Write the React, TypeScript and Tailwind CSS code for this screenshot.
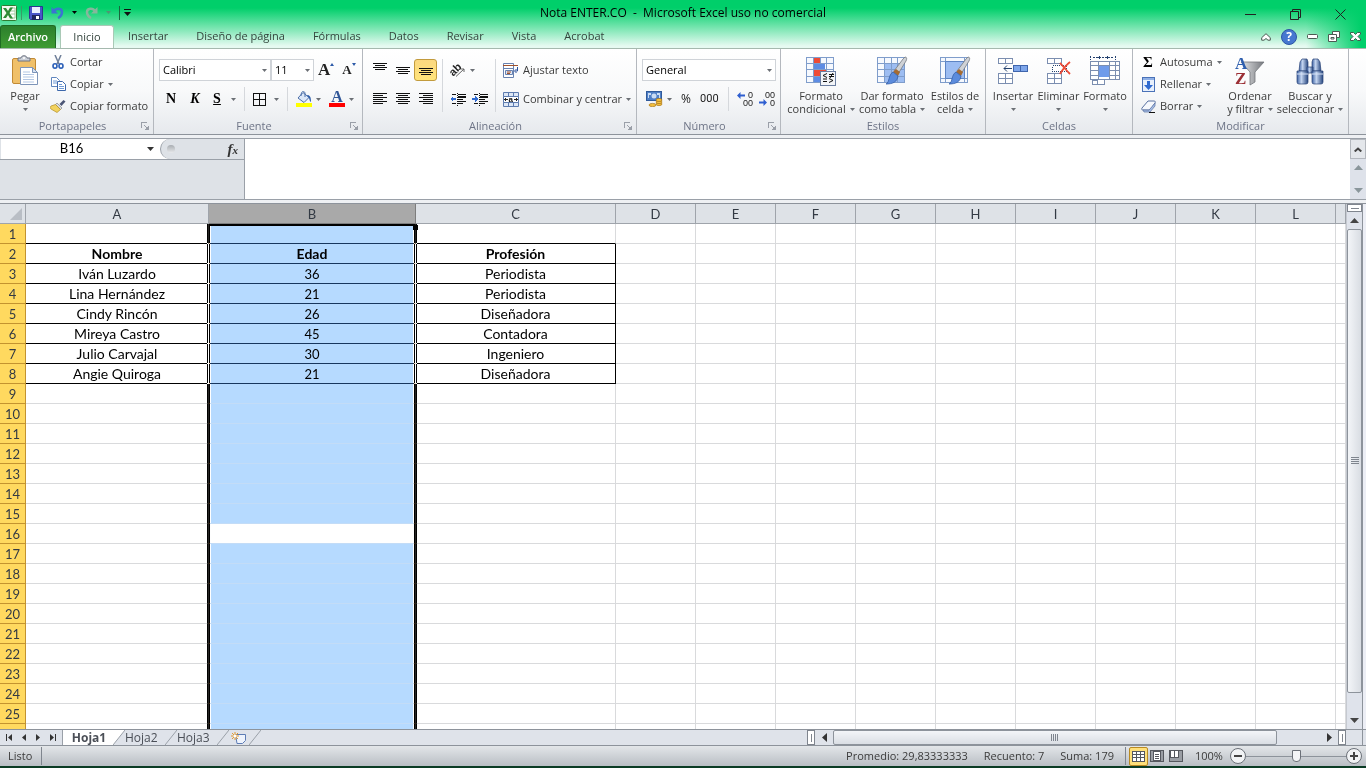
import type { ReactNode } from "react";

const menuTabs = ["Insertar", "Diseño de página", "Fórmulas", "Datos", "Revisar", "Vista", "Acrobat"];

const columns = ["A", "B", "C", "D", "E", "F", "G", "H", "I", "J", "K", "L", ""];

const people = [
    ["Nombre", "Edad", "Profesión"],
    ["Iván Luzardo", "36", "Periodista"],
    ["Lina Hernández", "21", "Periodista"],
    ["Cindy Rincón", "26", "Diseñadora"],
    ["Mireya Castro", "45", "Contadora"],
    ["Julio Carvajal", "30", "Ingeniero"],
    ["Angie Quiroga", "21", "Diseñadora"],
];

const ROWS = 30;
const ACTIVE_ROW = 16;

/* ---------- small shared pieces ---------- */

function Caret({ className = "text-[#6b6f75]" }: { className?: string }) {
    return (
        <svg width="5" height="3" viewBox="0 0 5 3" className={`shrink-0 ${className}`} aria-hidden="true">
            <path d="M0 0h5L2.500 3z" fill="currentColor" />
        </svg>
    );
}

function Divider() {
    return <span className="h-6 w-px shrink-0 bg-[#d5d8dc]" />;
}

function Group({ label, launcher, className, children }: { label: string; launcher?: boolean; className: string; children: ReactNode }) {
    return (
        <section className={`flex shrink-0 flex-col border-r border-[#b4b8be] ${className}`}>
            <div className="h-[69px]">{children}</div>
            <div className="flex h-4 items-center px-1 text-[#6d7486]">
                <span className="flex-1 text-center">{label}</span>
                {launcher && (
                    <button aria-label={`Opciones de ${label}`}>
                        <svg width="8" height="8" viewBox="0 0 8 8" fill="none" stroke="#9a9fa8" shapeRendering="crispEdges">
                            <path d="M.5 6V.5H6" />
                            <path d="M3 3l3 3" shapeRendering="auto" />
                            <path d="M7.500 4v3.500H4" />
                            <path d="M5 5h2v2H5z" fill="#9a9fa8" stroke="none" />
                        </svg>
                    </button>
                )}
            </div>
        </section>
    );
}

function SmallButton({ icon, label, caret }: { icon: ReactNode; label: string; caret?: boolean }) {
    return (
        <button className="flex h-[22px] items-center gap-1 whitespace-nowrap">
            <span className="flex w-4 justify-center">{icon}</span>
            {label}
            {caret && <Caret />}
        </button>
    );
}

function BigButton({ icon, lines, className }: { icon: ReactNode; lines: string[]; className: string }) {
    return (
        <button className={`flex shrink-0 flex-col items-center whitespace-nowrap pt-1 ${className}`}>
            <span className="flex h-9 items-center">{icon}</span>
            <span className="flex h-[14px] items-center">{lines[0]}</span>
            <span className="flex h-3 items-center gap-1">
                {lines[1]}
                <Caret />
            </span>
        </button>
    );
}

function Combo({ label, value, className }: { label: string; value: string; className: string }) {
    return (
        <div className={`relative shrink-0 ${className}`}>
            <select aria-label={label} className="h-[22px] w-full appearance-none border border-[#cfd3d8] bg-white px-[3px] text-black">
                <option>{value}</option>
            </select>
            <span className="pointer-events-none absolute inset-y-0 right-1 flex items-center">
                <Caret />
            </span>
        </div>
    );
}

/* ---------- icons ---------- */

function ExcelLogo() {
    return (
        <svg width="16" height="16" viewBox="0 0 16 16" aria-hidden="true">
            <rect x=".5" y=".5" width="15" height="15" rx="1" fill="#f4faf0" stroke="#2e7d32" />
            <path d="M10 3h4v10h-4" fill="#fff" stroke="#9ccc9c" />
            <path d="M10 6h4M10 9h4" stroke="#9ccc9c" />
            <path d="M2 3h3l2 3 2-3.500h3L8.500 8l3.500 5.500H9L7 10l-2 3H2l3.500-5z" fill="#2f8a34" />
        </svg>
    );
}

function SaveIcon() {
    return (
        <svg width="14" height="14" viewBox="0 0 14 14" aria-hidden="true">
            <path d="M.5.500h13v13h-12l-1-1z" fill="#4a55c8" stroke="#2d3590" />
            <path d="M3 1h8v6H3z" fill="#e9efff" />
            <path d="M3 9h8v5H3z" fill="#20265f" />
            <path d="M7 10h3v3H7z" fill="#fff" />
        </svg>
    );
}

function UndoIcon({ redo }: { redo?: boolean }) {
    return (
        <svg width="13" height="13" viewBox="0 0 13 13" fill="none" className={redo ? "-scale-x-100" : ""} aria-hidden="true">
            <path d="M3 5c2-3.500 8-3 8 1 0 3-2 5-4 6" stroke={redo ? "#86b79c" : "#3c74d2"} strokeWidth="2.500" />
            <path d="M.5 1v6.500H7z" fill={redo ? "#86b79c" : "#3c74d2"} />
        </svg>
    );
}

function PasteIcon() {
    return (
        <svg width="28" height="32" viewBox="0 0 28 32" aria-hidden="true">
            <rect x="1.500" y="3.500" width="23" height="25" rx="1.500" fill="#f0c069" stroke="#c28a35" />
            <path d="M7 6V3h3c0-3 6-3 6 0h3v3z" fill="#c9ced6" stroke="#6c7380" />
            <circle cx="13" cy="3" r="1" fill="#fff" />
            <path d="M9.500 12.500h12l5 5v12h-17z" fill="#fff" stroke="#7d94b8" />
            <path d="M21.500 12.500v5h5z" fill="#d5e1f2" stroke="#7d94b8" />
            <path d="M12 17h7M12 19.500h11M12 22h11M12 24.500h11M12 27h11" stroke="#b3c7e4" />
        </svg>
    );
}

function CutIcon() {
    return (
        <svg width="12" height="14" viewBox="0 0 12 14" fill="none" aria-hidden="true">
            <path d="M3 0l4 9M9 0L5 9" stroke="#6f7f99" strokeWidth="1.500" />
            <ellipse cx="3" cy="11" rx="2" ry="2.200" stroke="#2b5fb8" strokeWidth="1.600" />
            <ellipse cx="9" cy="11" rx="2" ry="2.200" stroke="#2b5fb8" strokeWidth="1.600" />
        </svg>
    );
}

function CopyIcon() {
    return (
        <svg width="15" height="14" viewBox="0 0 15 14" fill="#fff" aria-hidden="true">
            <path d="M.5.500h5l3 3v6h-8z" stroke="#5f86bf" />
            <path d="M2 4h4M2 6h4" stroke="#6f9ad6" />
            <path d="M6.500 4.500h5l3 3v6h-8z" stroke="#3d68ab" />
            <path d="M8 7.500h3M8 9.500h5M8 11.500h5" stroke="#6f9ad6" />
        </svg>
    );
}

function BrushIcon() {
    return (
        <svg width="16" height="13" viewBox="0 0 16 13" aria-hidden="true">
            <path d="M15.500 1.500L13.500 0 9.500 4l2 2z" fill="#4b5575" />
            <path d="M7 3l5 5-1.500 1.500-5-5z" fill="#d8dbe0" stroke="#777" strokeWidth=".6" />
            <path d="M5.500 4.500l5 5L7 12.500 1 9c-1-1-1-2 0-3z" fill="#f2d25e" stroke="#b18c23" strokeWidth=".7" />
        </svg>
    );
}

function LinesIcon({ rows }: { rows: [number, number][] }) {
    return (
        <svg width="14" height="12" viewBox="0 0 14 12" shapeRendering="crispEdges" aria-hidden="true">
            {rows.map(([x, w], i) => (
                <rect key={i} x={x} y={i * 2} width={w} height="1" fill="#111" />
            ))}
        </svg>
    );
}

function IndentIcon({ right }: { right?: boolean }) {
    return (
        <svg width="16" height="13" viewBox="0 0 16 13" shapeRendering="crispEdges" aria-hidden="true">
            <path d="M2 1.500h4M8 1.500h8M8 3.500h8M8 6.500h5M8 8.500h8M2 10.500h4M8 10.500h5" stroke="#111" />
            <path d="M8 4.500h8" stroke="#111" />
            <path d="M7.500 0v13" stroke="#111" strokeDasharray="1 1" />
            <path d={right ? "M6 6L3 3v2H0v2h3v2z" : "M0 6l3-3v2h3v2H3v2z"} fill="#2f6ad0" />
        </svg>
    );
}

function OrientationIcon() {
    return (
        <svg width="16" height="14" viewBox="0 0 16 14" className="overflow-visible" aria-hidden="true">
            <text x="0" y="10" fontSize="11" fontFamily="Liberation Sans, sans-serif" fontWeight="bold" transform="rotate(-45 6 8)" fill="#222">ab</text>
            <path d="M6 13.500L14 6M14 9V6h-3" stroke="#666" fill="none" />
        </svg>
    );
}

function WrapIcon() {
    return (
        <svg width="16" height="15" viewBox="0 0 16 15" fill="none" aria-hidden="true">
            <path d="M.5.500h10v14H.5z" fill="#fff" stroke="#6882b0" />
            <path d="M0 2.500h15" stroke="#a0522d" />
            <path d="M1 5.500h10" stroke="#6882b0" />
            <path d="M2.500 7.500h7v4h-7z" fill="#dfe8f7" stroke="#6882b0" />
            <path d="M4 9h4M4 10.500h3" stroke="#a0522d" />
            <path d="M14.500 4v4h-2M13.500 6l-2 2 2 2" stroke="#2b4f9b" />
        </svg>
    );
}

function MergeIcon() {
    return (
        <svg width="16" height="15" viewBox="0 0 16 15" fill="none" aria-hidden="true">
            <path d="M.5.500h15v14H.5z" fill="#dde7f6" stroke="#5e7caf" />
            <path d="M5.500.500v4M10.500.500v4M5.500 10.500v4M10.500 10.500v4" stroke="#5e7caf" />
            <path d="M.5 4.500h15v6H.5z" fill="#fff" stroke="#5e7caf" />
            <path d="M1 7.500h4M11 7.500h4M3 6L1.500 7.500 3 9M13 6l1.500 1.500L13 9" stroke="#222" />
            <text x="5.500" y="10" fontSize="8" fontWeight="bold" fontFamily="Liberation Sans, sans-serif" fill="#111">a</text>
        </svg>
    );
}

function BorderIcon() {
    return (
        <svg width="13" height="13" viewBox="0 0 13 13" fill="none" stroke="#111" shapeRendering="crispEdges" aria-hidden="true">
            <path d="M.5.500h12v12H.5zM6.500 0v13M0 6.500h13" />
        </svg>
    );
}

function FillIcon() {
    return (
        <svg width="16" height="16" viewBox="0 0 16 16" aria-hidden="true">
            <path d="M0 12h16v4H0z" fill="#ffff00" />
            <path d="M7 1.500l6 5-5 5-6-4.500z" fill="#dbe7f8" stroke="#4b6ea8" />
            <path d="M5 5c0-5 3-6 4-3v4" fill="none" stroke="#4b6ea8" />
            <path d="M11 4c3 0 4 2 4 7-2-1-1-4-3-5z" fill="#2c5ba8" />
        </svg>
    );
}

function MoneyIcon() {
    return (
        <svg width="17" height="16" viewBox="0 0 17 16" aria-hidden="true">
            <rect x=".5" y=".5" width="15" height="9" fill="#4f7fc6" stroke="#2f5a9b" />
            <path d="M2 2h3v2H3v3H2zM14 2h-3v2h2v3h1z" fill="#c9dcf4" />
            <circle cx="8" cy="5" r="2.500" fill="#c9dcf4" />
            <g fill="#f3bf3d" stroke="#a8761a" strokeWidth=".7">
                <ellipse cx="13" cy="13" rx="3" ry="1.600" />
                <ellipse cx="13" cy="11" rx="3" ry="1.600" />
                <ellipse cx="13" cy="9" rx="3" ry="1.600" />
                <ellipse cx="6.500" cy="14" rx="3.500" ry="1.600" />
            </g>
        </svg>
    );
}

function DecimalIcon({ less }: { less?: boolean }) {
    return (
        <svg width="16" height="14" viewBox="0 0 16 14" className="overflow-visible" aria-hidden="true">
            <g fontFamily="Liberation Sans, sans-serif" fontSize="9" fill="#222">
                <text x={less ? 6 : 11} y="6">{less ? "00" : "0"}</text>
                <text x={less ? 11 : 6} y="14">{less ? "0" : "00"}</text>
            </g>
            <path d={less ? "M8 10.500L4.500 7v2.500H0v2h4.500V14z" : "M0 3.500L3.500 0v2.500H8v2H3.500V7z"} fill="#2f5fd0" />
        </svg>
    );
}

function TableBase({ children }: { children?: ReactNode }) {
    return (
        <svg width="32" height="30" viewBox="0 0 32 30" aria-hidden="true">
            <path d="M1.500 1.500h27v25h-27z" fill="#f6f9fe" />
            {children}
        </svg>
    );
}

function StyleBrush() {
    return (
        <g>
            <path d="M29 1c2 0 2 2 1 4l-8 13-4-3L27 3z" fill="#cfd2d6" stroke="#74787f" strokeWidth=".8" />
            <path d="M20 13l4 3-2 4-5-4z" fill="#a56b32" />
            <path d="M17 16l5 4c-1 6-5 8-12 8 4-2 2-9 7-12z" fill="#5b8bdc" stroke="#355fa8" strokeWidth=".8" />
        </g>
    );
}

function ConditionalIcon() {
    return (
        <TableBase>
            <path d="M8 1h7v6H8z M8 14h13v6H8z" fill="#ee4b36" />
            <path d="M8 7h12v6H8zM8 20h8v6H8z" fill="#5d8ce4" />
            <path d="M1.500 1.500h27v25h-27zM1.500 7.500h27M1.500 13.500h27M1.500 20.500h27M8.500 1v26M15.500 1v6M21.500 1v26" stroke="#7f9dcb" fill="none" shapeRendering="crispEdges" />
            <rect x="15.500" y="15.500" width="15" height="14" fill="#f3f5f8" stroke="#6b7ea0" />
            <path d="M22 17.500l-4 2 4 2M18 23h4M18 25.500h4M24 18.500h5M24 20.500h5M28 17l-3 5M24 22.500l4 2-4 2" stroke="#111" fill="none" />
        </TableBase>
    );
}

function TableFormatIcon() {
    return (
        <TableBase>
            <path d="M8 8h20v18H8z" fill="#9dbdf2" />
            <path d="M1.500 1.500h27v25h-27zM1.500 7.500h27M1.500 13.500h27M1.500 20.500h27M8.500 1v26M15.500 1v26M21.500 1v26" stroke="#7f9dcb" fill="none" shapeRendering="crispEdges" />
            <StyleBrush />
        </TableBase>
    );
}

function CellStyleIcon() {
    return (
        <TableBase>
            <path d="M1.500 1.500h27v25h-27zM1.500 5.500h27M1.500 22.500h27M6.500 1v26M25.500 1v26" stroke="#7f9dcb" fill="none" shapeRendering="crispEdges" />
            <path d="M6.500 5.500h19v17h-19z" fill="#9dbdf2" stroke="#5d84c4" />
            <StyleBrush />
        </TableBase>
    );
}

function InsertCellsIcon() {
    return (
        <svg width="32" height="28" viewBox="0 0 32 28" fill="#fff" stroke="#7b8eb0" shapeRendering="crispEdges" aria-hidden="true">
            <path d="M1.500 1.500h14v5h-14zM8.500 1.500v5M1.500 16.500h14v10h-14zM8.500 16.500v10M1.500 21.500h14" />
            <path d="M16.500 8.500h14v6h-14z" fill="#7ea6ea" stroke="#3f65ac" />
            <path d="M23.500 8.500v6" stroke="#3f65ac" />
            <path d="M7 11.500h8M10 8.500l-3 3 3 3" stroke="#24426f" fill="none" shapeRendering="auto" />
        </svg>
    );
}

function DeleteCellsIcon() {
    return (
        <svg width="28" height="28" viewBox="0 0 28 28" fill="#fff" stroke="#7b8eb0" aria-hidden="true">
            <path d="M2.500 1.500h14v5h-14zM9.500 1.500v5M2.500 16.500h14v10h-14zM9.500 16.500v10M2.500 21.500h14" shapeRendering="crispEdges" />
            <path d="M7.500 8.500h14v6h-14z" stroke="#24426f" strokeDasharray="1 1" shapeRendering="crispEdges" />
            <path d="M15 6c3 3 6 7 10 11M25 5c-4 3-7 7-10 12" stroke="#ee4b36" strokeWidth="1.800" fill="none" />
        </svg>
    );
}

function FormatCellsIcon() {
    return (
        <svg width="32" height="30" viewBox="0 0 32 30" fill="#fff" stroke="#7b8eb0" shapeRendering="crispEdges" aria-hidden="true">
            <path d="M1.500 5.500h29v18h-29z" />
            <path d="M3.500 24.500h5v4h-5zM8.500 23.500h7v5h-7z" />
            <path d="M1.500 9.500h29M1.500 14.500h29M1.500 19.500h29M9.500 5v19M20.500 5v19M26.500 5v19" />
            <path d="M10 10h10v11H10z" fill="#6f9bea" stroke="none" />
            <path d="M1.500 0v4M26.500 0v4M4 1.500h20" stroke="#24426f" strokeDasharray="2 1" />
            <path d="M11 0L8 1.500 11 3M18 0l3 1.500L18 3" fill="#24426f" stroke="none" />
        </svg>
    );
}

function FillDownIcon() {
    return (
        <svg width="13" height="15" viewBox="0 0 13 15" aria-hidden="true">
            <rect x=".5" y=".5" width="12" height="14" fill="#e8f0fc" stroke="#4a72b8" />
            <path d="M1 1h11v2H1z" fill="#8fb0e6" />
            <path d="M5 4h3v4h3l-4.500 5L2 8h3z" fill="#2f6ad0" />
        </svg>
    );
}

function EraserIcon() {
    return (
        <svg width="15" height="13" viewBox="0 0 15 13" aria-hidden="true">
            <path d="M7 1h6c1.500 0 1.500 1 1 2l-5 7H2C.500 10 .5 9 1 8z" fill="#f6f8fc" stroke="#5870a0" />
            <path d="M2 10l6 .2L14 3v3l-5 6H3z" fill="#a9bfe6" stroke="#5870a0" strokeWidth=".7" />
            <path d="M8 12.500h6" stroke="#111" />
        </svg>
    );
}

function SortFilterIcon() {
    return (
        <svg width="30" height="30" viewBox="0 0 30 30" aria-hidden="true">
            <defs>
                <linearGradient id="funnel" x1="0" x2="1">
                    <stop offset="0" stopColor="#e5e6e8" />
                    <stop offset="1" stopColor="#75787d" />
                </linearGradient>
            </defs>
            <path d="M6 6h23l-9 10v10l-5 3V16z" fill="url(#funnel)" stroke="#74777c" strokeWidth=".8" />
            <g fontFamily="Liberation Serif, serif" fontWeight="bold" fontSize="17">
                <text x="0" y="13" fill="#2f5fae">A</text>
                <text x="0" y="28" fill="#9b2f35">Z</text>
            </g>
        </svg>
    );
}

function BinocularsIcon() {
    return (
        <svg width="30" height="28" viewBox="0 0 30 28" aria-hidden="true">
            <defs>
                <linearGradient id="barrel" x1="0" x2="1">
                    <stop offset="0" stopColor="#3d62a4" />
                    <stop offset=".4" stopColor="#c4d5f0" />
                    <stop offset="1" stopColor="#274780" />
                </linearGradient>
            </defs>
            <g fill="url(#barrel)" stroke="#2a4477" strokeWidth=".7">
                <path d="M7 2h5l1 3v9H4l1-9z" />
                <path d="M18 2h5l2 3 1 9h-9V5z" />
                <path d="M12 10h6v6h-6z" />
                <path d="M2 14h11v11a2 2 0 01-2 2H4a2 2 0 01-2-2z" />
                <path d="M17 14h11v11a2 2 0 01-2 2h-7a2 2 0 01-2-2z" />
            </g>
            <path d="M2 17h11M17 17h11" stroke="#dbe6f8" />
        </svg>
    );
}

/* ---------- title bar and tabs ---------- */

function TitleBar() {
    return (
        <header className="grid h-[25px] grid-cols-[1fr_auto_1fr] items-center text-[12px] text-black">
            <div className="flex items-center pl-px">
                <ExcelLogo />
                <span className="ml-1 h-3.5 w-px bg-[#3a9c67]" />
                <button aria-label="Guardar" className="ml-[7px]"><SaveIcon /></button>
                <button aria-label="Deshacer" className="ml-2 flex items-center gap-2">
                    <UndoIcon />
                    <Caret className="text-black" />
                </button>
                <button aria-label="Rehacer" className="ml-2 flex items-center gap-2">
                    <UndoIcon redo />
                    <Caret className="text-[#4f9672]" />
                </button>
                <span className="ml-2 h-3.5 w-px bg-[#17663d]" />
                <button aria-label="Personalizar" className="ml-1">
                    <svg width="7" height="7" viewBox="0 0 7 7" aria-hidden="true">
                        <path d="M0 0h7v1H0zM0 3h7L3.500 7z" fill="#111" />
                    </svg>
                </button>
            </div>
            <h1>Nota ENTER.CO&nbsp; -&nbsp; Microsoft Excel uso no comercial</h1>
            <div className="flex items-center justify-end gap-[34px] pr-5 pt-1">
                <button aria-label="Minimizar">
                    <svg width="11" height="11" viewBox="0 0 11 11" stroke="#222"><path d="M0 5.500h11" /></svg>
                </button>
                <button aria-label="Restaurar">
                    <svg width="11" height="11" viewBox="0 0 11 11" stroke="#222" fill="none"><path d="M.5 2.500h8v8h-8zM2.500 2.500v-2h8v8h-2" /></svg>
                </button>
                <button aria-label="Cerrar">
                    <svg width="11" height="11" viewBox="0 0 11 11" stroke="#222"><path d="M.5.500l10 10M10.500.500l-10 10" /></svg>
                </button>
            </div>
        </header>
    );
}

function TabBar() {
    return (
        <nav className="flex h-[23px] items-stretch text-[11px] text-[#33443c]">
            <button className="w-14 rounded-t-[3px] border border-b-0 border-[#1e6b22] bg-linear-to-b from-[#2c7f2c] to-[#3f9c33] font-semibold text-white">Archivo</button>
            <button className="ml-1 w-[54px] rounded-t-[3px] border border-b-0 border-[#a9c9b6] bg-white">Inicio</button>
            {menuTabs.map((tab) => (
                <button key={tab} className="px-3.5">{tab}</button>
            ))}
            <div className="ml-auto flex items-center gap-2.5 pr-[5px]">
                <button aria-label="Minimizar la cinta">
                    <svg width="10" height="8" viewBox="0 0 10 8"><path d="M5 .7l4.300 4v2.500H7L5 5.500 3 7.200H.7V4.700z" fill="#fff" stroke="#4a5a52" /></svg>
                </button>
                <button aria-label="Ayuda" className="flex h-4 w-4 items-center justify-center rounded-full border border-[#2d55a5] bg-[#4678d0] text-[12px] font-bold text-white">?</button>
                <button aria-label="Minimizar ventana">
                    <svg width="11" height="5" viewBox="0 0 11 5"><rect x=".5" y=".5" width="10" height="4" rx="1" fill="#fff" stroke="#4a5a52" /></svg>
                </button>
                <button aria-label="Restaurar ventana">
                    <svg width="12" height="11" viewBox="0 0 12 11" fill="#fff" stroke="#4a5a52"><path d="M4.500.500h7v6h-7z" /><path d="M.5 3.500h8v7h-8zM3 6.500h3v1.500H3z" /></svg>
                </button>
                <button aria-label="Cerrar ventana">
                    <svg width="11" height="9" viewBox="0 0 11 9"><path d="M.5.500h3L5.500 2.500l2-2h3v1.500L8 4.500 10.500 7v1.500h-3l-2-2-2 2h-3V7L3 4.500.500 2z" fill="#fff" stroke="#3f5f50" /></svg>
                </button>
            </div>
        </nav>
    );
}

/* ---------- ribbon ---------- */

const full: [number, number] = [0, 14];
const short: [number, number] = [2, 10];
const left: [number, number] = [0, 10];
const right: [number, number] = [4, 10];

function Ribbon() {
    return (
        <div className="flex shrink-0 overflow-hidden border-y border-[#8d939b] border-t-[#a5b9ae] bg-linear-to-b from-white via-[#f8f9fa] to-[#e6e9ed] text-[11px] leading-[14px] text-[#3b3b3b]">
            <Group label="Portapapeles" launcher className="w-[154px]">
                <div className="flex">
                    <BigButton className="w-[50px]" icon={<PasteIcon />} lines={["Pegar", ""]} />
                    <div className="flex flex-col pt-0.5">
                        <SmallButton icon={<CutIcon />} label="Cortar" />
                        <SmallButton icon={<CopyIcon />} label="Copiar" caret />
                        <SmallButton icon={<BrushIcon />} label="Copiar formato" />
                    </div>
                </div>
            </Group>

            <Group label="Fuente" launcher className="w-[209px]">
                <div className="flex h-full flex-col gap-1.5 pl-[5px] pt-2.5">
                    <div className="flex h-[22px] items-center">
                        <Combo label="Fuente" value="Calibri" className="w-[112px]" />
                        <Combo label="Tamaño" value="11" className="w-[43px]" />
                        <button aria-label="Aumentar tamaño" className="ml-1 flex font-['Liberation_Serif',serif] text-[17px] font-bold text-[#222]">
                            A<svg width="4" height="3" viewBox="0 0 4 3"><path d="M0 3h4L2 0z" fill="#2d5aa8" /></svg>
                        </button>
                        <button aria-label="Reducir tamaño" className="ml-2 flex font-['Liberation_Serif',serif] text-[13px] font-bold text-[#222]">
                            A<svg width="4" height="3" viewBox="0 0 4 3"><path d="M0 0h4L2 3z" fill="#2d5aa8" /></svg>
                        </button>
                    </div>
                    <div className="flex h-6 items-center font-['Liberation_Serif',serif] text-[14px] font-bold text-black">
                        <button className="w-6">N</button>
                        <button className="w-6 italic">K</button>
                        <button className="w-5 underline">S</button>
                        <button aria-label="Opciones de subrayado" className="mr-2 ml-1"><Caret /></button>
                        <Divider />
                        <button aria-label="Bordes" className="mr-2 ml-2 flex items-center gap-2"><BorderIcon /><Caret /></button>
                        <Divider />
                        <button aria-label="Color de relleno" className="ml-2 flex items-center gap-1"><FillIcon /><Caret /></button>
                        <button aria-label="Color de fuente" className="ml-2 flex items-center gap-1">
                            <span className="flex h-4 w-4 flex-col items-center justify-end border-b-4 border-[#ff0000] text-[16px] leading-3 text-[#2f5597]">A</span>
                            <Caret />
                        </button>
                    </div>
                </div>
            </Group>

            <Group label="Alineación" launcher className="w-[274px]">
                <div className="flex h-full pt-2.5 pb-1.5">
                    <div className="flex w-[79px] shrink-0 flex-col gap-1.5 pl-[5px]">
                        <div className="flex h-[22px] items-center">
                            <button aria-label="Alinear arriba" className="flex h-[22px] w-[23px] justify-center pt-1"><LinesIcon rows={[full, short, full, short]} /></button>
                            <button aria-label="Alinear al medio" className="flex h-[22px] w-[23px] justify-center pt-2"><LinesIcon rows={[full, short, full, short]} /></button>
                            <button aria-label="Alinear abajo" className="flex h-[22px] w-[23px] items-end justify-center rounded-[3px] border border-[#c29b3d] bg-linear-to-b from-[#fbd880] to-[#ffe47a]"><LinesIcon rows={[full, short, full, short]} /></button>
                        </div>
                        <div className="flex h-6 items-center">
                            <button aria-label="Alinear a la izquierda" className="flex w-[23px] justify-center"><LinesIcon rows={[full, left, full, left, full, left]} /></button>
                            <button aria-label="Centrar" className="flex w-[23px] justify-center"><LinesIcon rows={[full, short, full, short, full, short]} /></button>
                            <button aria-label="Alinear a la derecha" className="flex w-[23px] justify-center"><LinesIcon rows={[full, right, full, right, full, right]} /></button>
                        </div>
                    </div>
                    <div className="flex w-[53px] shrink-0 flex-col gap-1.5 border-l border-[#d5d8dc] pl-[7px]">
                        <button aria-label="Orientación" className="flex h-[22px] items-center gap-1"><OrientationIcon /><Caret /></button>
                        <div className="flex h-6 items-center gap-1.5">
                            <button aria-label="Disminuir sangría"><IndentIcon /></button>
                            <button aria-label="Aumentar sangría"><IndentIcon right /></button>
                        </div>
                    </div>
                    <div className="flex flex-col gap-[7px] border-l border-[#d5d8dc] pl-[7px]">
                        <SmallButton icon={<WrapIcon />} label="Ajustar texto" />
                        <SmallButton icon={<MergeIcon />} label="Combinar y centrar" caret />
                    </div>
                </div>
            </Group>

            <Group label="Número" launcher className="w-[144px]">
                <div className="flex h-full flex-col gap-1.5 px-[5px] pt-2.5">
                    <Combo label="Formato de número" value="General" className="w-[134px]" />
                    <div className="flex h-6 items-center text-[12px] text-[#222]">
                        <button aria-label="Formato de contabilidad" className="flex items-center gap-1 pl-1"><MoneyIcon /><Caret /></button>
                        <button className="ml-[5px] w-5">%</button>
                        <button className="ml-1 mr-2 w-6 font-['Roboto',sans-serif] text-[11px]">000</button>
                        <Divider />
                        <button aria-label="Aumentar decimales" className="ml-2"><DecimalIcon /></button>
                        <button aria-label="Disminuir decimales" className="ml-1.5"><DecimalIcon less /></button>
                    </div>
                </div>
            </Group>

            <Group label="Estilos" className="w-[205px]">
                <div className="flex pl-1">
                    <BigButton className="w-[72px]" icon={<ConditionalIcon />} lines={["Formato", "condicional"]} />
                    <BigButton className="w-[70px]" icon={<TableFormatIcon />} lines={["Dar formato", "como tabla"]} />
                    <BigButton className="w-[56px]" icon={<CellStyleIcon />} lines={["Estilos de", "celda"]} />
                </div>
            </Group>

            <Group label="Celdas" className="w-[147px]">
                <div className="flex pl-1">
                    <BigButton className="w-[46px]" icon={<InsertCellsIcon />} lines={["Insertar", ""]} />
                    <BigButton className="w-[45px]" icon={<DeleteCellsIcon />} lines={["Eliminar", ""]} />
                    <BigButton className="w-[48px]" icon={<FormatCellsIcon />} lines={["Formato", ""]} />
                </div>
            </Group>

            <Group label="Modificar" className="w-[216px]">
                <div className="flex pl-[7px]">
                    <div className="flex w-[85px] flex-col pt-0.5">
                        <SmallButton icon={<span className="font-['Liberation_Serif',serif] text-[15px] font-bold text-black">Σ</span>} label="Autosuma" caret />
                        <SmallButton icon={<FillDownIcon />} label="Rellenar" caret />
                        <SmallButton icon={<EraserIcon />} label="Borrar" caret />
                    </div>
                    <BigButton className="w-[50px]" icon={<SortFilterIcon />} lines={["Ordenar", "y filtrar"]} />
                    <BigButton className="w-[70px]" icon={<BinocularsIcon />} lines={["Buscar y", "seleccionar"]} />
                </div>
            </Group>
        </div>
    );
}

/* ---------- formula bar ---------- */

function FormulaBar() {
    return (
        <div className="shrink-0 border-b border-[#8d939b] bg-[#eef0f3] pt-[3px] pb-[3px]">
            <div className="flex h-[62px] border-y border-[#9aa0a8]">
                <div className="flex w-[245px] shrink-0 flex-col border-r border-[#9aa0a8] bg-[#dee2e7]">
                    <div className="flex h-[21px] border-b border-[#9aa0a8] pl-px">
                        <label className="flex w-[159px] items-center bg-white">
                            <input aria-label="Cuadro de nombres" defaultValue="B16" className="w-[141px] bg-transparent text-center font-['Lato',sans-serif] text-[13px] text-black outline-none" />
                            <svg width="7" height="4" viewBox="0 0 7 4" className="ml-[5px]"><path d="M0 0h7L3.500 4z" fill="#333" /></svg>
                        </label>
                        <div className="flex flex-1 items-center justify-between bg-white">
                            <div className="flex h-5 flex-1 items-center justify-between rounded-l-full border-l border-[#9aa0a8] bg-[#dee2e7] pl-1.5 pr-1.5">
                                <span className="h-2 w-2 rounded-full bg-linear-to-b from-[#a9adb2] to-[#e8eaec]" />
                                <button className="font-['Liberation_Serif',serif] text-[15px] font-bold italic leading-4 text-[#333]">
                                    f<span className="text-[11px]">x</span>
                                </button>
                            </div>
                        </div>
                    </div>
                </div>
                <textarea aria-label="Barra de fórmulas" className="min-w-0 flex-1 resize-none bg-white outline-none" />
                <div className="flex w-4 shrink-0 flex-col items-center bg-[#dee2ea]">
                    <button aria-label="Contraer barra de fórmulas" className="flex h-5 w-4 items-center justify-center border border-[#b4b8be] bg-[#e4e7eb]">
                        <svg width="8" height="5" viewBox="0 0 8 5" fill="none" stroke="#444" strokeWidth="2"><path d="M.7 4.500L4 1.500l3.300 3" /></svg>
                    </button>
                    <div className="flex flex-1 flex-col items-center justify-between py-1.5">
                        <svg width="9" height="5" viewBox="0 0 9 5"><path d="M0 5h9L4.500 0z" fill="#8a969b" /></svg>
                        <svg width="9" height="5" viewBox="0 0 9 5"><path d="M0 0h9L4.500 5z" fill="#8a969b" /></svg>
                    </div>
                </div>
            </div>
        </div>
    );
}

/* ---------- worksheet ---------- */

function cellClass(row: number, col: number) {
    const inTable = row >= 2 && row <= 8 && col < 3;
    const aboveTable = row === 1 && col < 3;
    if (col === 1) {
        let fill = "bg-[#b6daff] shadow-[inset_2px_0_0_#fff,inset_-2px_0_0_#fff]";
        if (row === 1) fill = "bg-[#b6daff] shadow-[inset_2px_0_0_#fff,inset_-2px_0_0_#fff,inset_0_2px_0_#fff]";
        if (row === ACTIVE_ROW) fill = "bg-white";
        const bottom = inTable || aboveTable ? "border-b-[#17365d]" : "border-b-[#c3dcf7]";
        const size = row > 2 ? "text-[13px]" : "text-[14px]";
        return `${fill} ${bottom} ${size} ${inTable ? "border-r-black" : "border-r-[#d9dadc]"}`;
    }
    return `text-[14px] ${inTable ? "border-r-black" : "border-r-[#d9dadc]"} ${inTable || aboveTable ? "border-b-black" : "border-b-[#d9dadc]"}`;
}

function Sheet() {
    return (
        <div className="relative min-w-0 flex-1 overflow-hidden bg-white">
            <table className="w-full table-fixed border-separate border-spacing-0 font-['Lato',sans-serif] text-[13px] leading-[18px] text-black">
                <colgroup>
                    <col className="w-[26px]" />
                    <col className="w-[183px]" />
                    <col className="w-[207px]" />
                    <col className="w-[200px]" />
                    {columns.slice(3, 12).map((c) => <col key={c} className="w-20" />)}
                    <col />
                </colgroup>
                <thead>
                    <tr className="h-5 text-[#333a44]">
                        <th className="border-r border-b border-[#9fa4ab] bg-[#dee2e7] p-0">
                            <svg width="12" height="12" viewBox="0 0 12 12" className="ml-2.5"><path d="M12 0v12H0z" fill="#b9bec5" /></svg>
                        </th>
                        {columns.map((c, i) => (
                            <th key={i} className={`border-r border-b p-0 pt-px font-normal ${i === 1 ? "border-[#7d7d7d] bg-[#a9a9a9]" : "border-[#9fa4ab] bg-[#dee2e7]"}`}>{c}</th>
                        ))}
                    </tr>
                </thead>
                <tbody>
                    {Array.from({ length: ROWS }, (_, r) => r + 1).map((row) => (
                        <tr key={row} className="h-5">
                            <th className="border-r border-b border-[#c3932f] bg-[#ffd95f] p-0 pt-px font-normal text-[#333a44]">{row}</th>
                            {columns.map((_, col) => (
                                <td key={col} className={`border-r border-b p-0 pt-px text-center ${cellClass(row, col)} ${row === 2 ? "font-bold" : ""}`}>
                                    {people[row - 2]?.[col]}
                                </td>
                            ))}
                        </tr>
                    ))}
                </tbody>
            </table>
            {/* selection frame inverts whatever grid lines run under it */}
            <div className="pointer-events-none absolute top-5 -bottom-1 left-[207px] w-[210px] border-[3px] border-t-2 border-white mix-blend-difference" />
            <span className="pointer-events-none absolute top-[21px] left-[413px] h-[5px] w-[5px] bg-black" />
        </div>
    );
}

function VerticalScroll() {
    return (
        <div className="flex w-5 shrink-0 border-l border-[#c5c9d0] bg-[#eceef5]">
            <div className="flex w-4 flex-col items-center border-r border-[#8d939b] bg-[#dfe3eb]">
                <span className="flex h-2 w-[15px] shrink-0 items-center justify-center border border-[#7f858e] bg-white"><i className="h-px w-2 bg-[#7f858e]" /></span>
                <button aria-label="Subir" className="flex h-[17px] shrink-0 items-center">
                    <svg width="9" height="5" viewBox="0 0 9 5"><path d="M0 5h9L4.500 0z" fill="#444" /></svg>
                </button>
                <div className="w-full flex-1">
                    <div className="flex h-[96%] w-full items-center justify-center rounded-[2px] border border-[#8d939b] bg-linear-to-r from-[#f3f5f8] to-[#d9dde3]">
                        <svg width="8" height="8" viewBox="0 0 8 8" stroke="#7f858e" shapeRendering="crispEdges"><path d="M0 .5h8M0 2.500h8M0 4.500h8M0 6.500h8" /></svg>
                    </div>
                </div>
                <button aria-label="Bajar" className="flex h-[17px] shrink-0 items-center">
                    <svg width="9" height="5" viewBox="0 0 9 5"><path d="M0 0h9L4.500 5z" fill="#444" /></svg>
                </button>
            </div>
        </div>
    );
}

function Slant({ active }: { active?: boolean }) {
    return (
        <svg width="12" height="15" viewBox="0 0 12 15" className="shrink-0" aria-hidden="true">
            {active && <path d="M0 0h12L0 15z" fill="#fff" />}
            <path d="M0 15L12 0" stroke="#9aa0a8" fill="none" />
        </svg>
    );
}

function SheetTabs() {
    return (
        <div className="flex h-[17px] shrink-0 items-stretch border-t border-b border-[#8d939b] bg-[#dfe3ea]">
            <div className="flex w-[63px] items-center justify-between border-r border-[#9aa0a8] px-1.5 text-[#333]">
                <button aria-label="Primera hoja"><svg width="6" height="7" viewBox="0 0 6 7"><path d="M0 0h1v7H0zM6 0v7L2 3.500z" fill="currentColor" /></svg></button>
                <button aria-label="Hoja anterior"><svg width="4" height="7" viewBox="0 0 4 7"><path d="M4 0v7L0 3.500z" fill="currentColor" /></svg></button>
                <button aria-label="Hoja siguiente"><svg width="4" height="7" viewBox="0 0 4 7"><path d="M0 0v7l4-3.500z" fill="currentColor" /></svg></button>
                <button aria-label="Última hoja"><svg width="6" height="7" viewBox="0 0 6 7"><path d="M5 0h1v7H5zM0 0v7l4-3.500z" fill="currentColor" /></svg></button>
            </div>
            <div className="flex text-[12px] leading-[15px] text-[#4b4f57]">
                <button className="w-[50px] bg-white pl-0.5 text-center font-bold">Hoja1</button>
                <Slant active />
                <button className="w-10 text-left whitespace-nowrap">Hoja2</button>
                <Slant />
                <button className="w-10 text-left whitespace-nowrap">Hoja3</button>
                <Slant />
                <button aria-label="Insertar hoja" className="flex w-5 items-center pl-0.5">
                    <svg width="15" height="12" viewBox="0 0 15 12">
                        <path d="M4.500 2.500h10v6l-3 3H6z" fill="#eef3fc" stroke="#5d7cb5" />
                        <path d="M4 0v8M0 4h8M1 1l6 6M7 1L1 7" stroke="#e39a2d" />
                        <circle cx="4" cy="4" r="1.500" fill="#fff" />
                    </svg>
                </button>
                <Slant />
            </div>
            <div className="ml-auto flex w-[559px] items-stretch">
                <span className="flex w-2 items-center justify-center border border-[#7f858e] bg-white"><i className="h-2 w-px bg-[#7f858e]" /></span>
                <button aria-label="Izquierda" className="flex w-[18px] items-center justify-center">
                    <svg width="5" height="9" viewBox="0 0 5 9"><path d="M5 0v9L0 4.500z" fill="#333" /></svg>
                </button>
                <div className="flex flex-1">
                    <div className="flex w-[91%] items-center justify-center rounded-[2px] border border-[#8d939b] bg-linear-to-b from-[#f3f5f8] to-[#dadee4]">
                        <svg width="8" height="7" viewBox="0 0 8 7" stroke="#7f858e" shapeRendering="crispEdges"><path d="M.5 0v7M2.500 0v7M4.500 0v7M6.500 0v7" /></svg>
                    </div>
                </div>
                <button aria-label="Derecha" className="flex w-[17px] items-center justify-center">
                    <svg width="5" height="9" viewBox="0 0 5 9"><path d="M0 0v9l5-4.500z" fill="#333" /></svg>
                </button>
                <span className="flex w-2 items-center justify-center border border-[#7f858e] bg-white"><i className="h-2 w-px bg-[#7f858e]" /></span>
                <span className="mr-[3px] w-[17px] border-r border-[#8d939b]" />
            </div>
        </div>
    );
}

function StatusBar() {
    return (
        <footer className="flex h-[22px] shrink-0 items-center border-b-2 border-[#0a3b24] bg-linear-to-b from-[#e3e6e9] to-[#b9bec4] text-[11px] text-[#3b3b3b]">
            <span className="w-[41px] pl-2">Listo</span>
            <span className="h-[18px] w-px bg-[#7f858e]" />
            <div className="ml-auto flex items-center gap-4 pr-[11px]">
                <span>Promedio: 29,83333333</span>
                <span>Recuento: 7</span>
                <span>Suma: 179</span>
            </div>
            <span className="h-[18px] w-px bg-[#7f858e]" />
            <button aria-label="Normal" className="ml-[3px] flex h-[19px] w-[19px] items-center justify-center rounded-[2px] border border-[#b98a22] bg-[#ffe07a]">
                <svg width="13" height="11" viewBox="0 0 13 11" fill="#fff" stroke="#55585e" shapeRendering="crispEdges"><path d="M.5.500h12v10H.5zM.5 3.500h12M.5 6.500h12M4.500 0v11M8.500 0v11" /></svg>
            </button>
            <button aria-label="Diseño de página" className="ml-0.5">
                <svg width="14" height="12" viewBox="0 0 14 12" fill="#9a9ea4" stroke="#55585e" shapeRendering="crispEdges"><path d="M.5.500h13v11H.5z" /><path d="M3.500 1.500h7v9h-7zM5 4.500h4M5 6.500h4M5 8.500h4" fill="#fff" /></svg>
            </button>
            <button aria-label="Saltos de página" className="ml-[5px]">
                <svg width="14" height="12" viewBox="0 0 14 12" fill="#9a9ea4" stroke="#55585e" shapeRendering="crispEdges"><path d="M.5.500h13v11H.5z" /><path d="M1.500.500h4v7h-4zM5.500.500h4v7h-4z" fill="#fff" /></svg>
            </button>
            <span className="ml-3 w-[35px]">100%</span>
            <button aria-label="Alejar" className="flex h-4 w-4 items-center justify-center rounded-full border border-[#6b7078] bg-[#f1f3f5]">
                <i className="h-0.5 w-2 bg-[#444]" />
            </button>
            <input type="range" aria-label="Zoom" defaultValue="50" className="h-4 w-[100px] appearance-none bg-[linear-gradient(#8d939b,#8d939b)] bg-[length:100%_1px] bg-center bg-no-repeat [&::-webkit-slider-thumb]:h-3 [&::-webkit-slider-thumb]:w-[9px] [&::-webkit-slider-thumb]:appearance-none [&::-webkit-slider-thumb]:rounded-b-[4px] [&::-webkit-slider-thumb]:border [&::-webkit-slider-thumb]:border-[#6b7078] [&::-webkit-slider-thumb]:bg-[#f4f5f7]" />
            <button aria-label="Acercar" className="mr-1 flex h-4 w-4 items-center justify-center rounded-full border border-[#6b7078] bg-[#f1f3f5]">
                <svg width="8" height="8" viewBox="0 0 8 8"><path d="M3 0h2v3h3v2H5v3H3V5H0V3h3z" fill="#444" /></svg>
            </button>
        </footer>
    );
}

export default function App() {
    return (
        <div className="flex h-screen flex-col overflow-hidden bg-[#dee2e7] font-['Open_Sans',sans-serif]">
            <div className="shrink-0 bg-[linear-gradient(to_right,transparent_calc(100%_-_60px),#00cf6a_calc(100%_-_5px)),linear-gradient(to_bottom,#00cf6a_8px,#e6faf1_46px)]">
                <TitleBar />
                <TabBar />
            </div>
            <Ribbon />
            <FormulaBar />
            <main className="flex min-h-0 flex-1">
                <Sheet />
                <VerticalScroll />
            </main>
            <SheetTabs />
            <StatusBar />
        </div>
    );
}
